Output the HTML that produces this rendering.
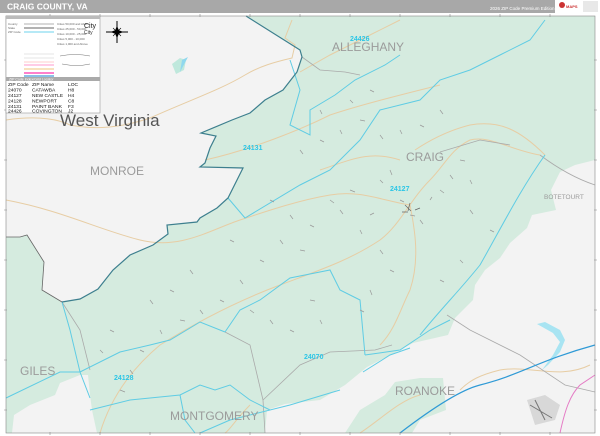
<!DOCTYPE html>
<html><head><meta charset="utf-8"><style>
html,body{margin:0;padding:0;background:#fff;width:600px;height:436px;overflow:hidden}
svg{display:block}
text{font-family:"Liberation Sans",sans-serif}
</style></head><body>
<svg width="600" height="436" viewBox="0 0 600 436" xmlns="http://www.w3.org/2000/svg">
<rect x="0" y="0" width="600" height="436" fill="#fff"/>
<rect x="0" y="0" width="600" height="13" fill="#a8a8a8"/>
<text x="7" y="9.5" font-size="8.5" font-weight="bold" fill="#fff">CRAIG COUNTY, VA</text>
<text x="490" y="10" font-size="4.5" fill="#fff">2026 ZIP Code Premium Edition</text>
<rect x="555" y="0" width="45" height="13" fill="#fff"/>
<circle cx="562" cy="5" r="3" fill="#c33"/>
<text x="566" y="8" font-size="4" fill="#c33" font-weight="bold">MAPS</text>
<rect x="583" y="1" width="15" height="11" fill="#e8e8e8"/>
<rect x="6" y="16" width="589" height="417" fill="#d5ebdf"/>
<path d="M6,16 L246,16 L300,50 L302,57 L297,72 L283,90 L265,100 L250,113 L232,120 L201,133 L216,136 L210,148 L205,163 L200,167 L243,168 L228,198 L217,208 L200,218 L197,222 L167,225 L168,234 L153,245 L130,255 L113,270 L98,289 L80,299 L62,302 L42,290 L44,262 L27,235 L20,237 L6,237 Z" fill="#f3f3f3"/>
<path d="M12,433 L14,415 L30,405 L55,395 L60,383 L80,375 L88,375 L90,395 L92,410 L97,433 Z" fill="#f3f3f3"/>
<path d="M595,160 L575,165 L560,172 L551,190 L556,210 L532,215 L527,228 L510,243 L500,258 L485,270 L475,285 L473,300 L455,318 L448,335 L413,343 L400,350 L367,367 L345,385 L320,400 L285,404 L267,410 L265,433 L595,433 Z" fill="#f3f3f3"/>
<path d="M345,433 L360,410 L385,395 L395,382 L420,378 L443,378 L446,410 L420,420 L412,433 Z" fill="#d5ebdf"/>
<path d="M537,324 L545,322 L560,330 L565,340 L560,352 L548,365 L542,370 L553,355 L560,342 L553,333 Z" fill="#a8e4f2"/>
<path d="M172,64 L180,58 L186,60 L184,70 L176,74 Z" fill="#bfe8dc"/>
<path d="M182,60 L188,57 L180,72 Z" fill="#8fd8ee"/>
<g fill="none" stroke="#e7cda4" stroke-width="1">
<path d="M6,120 C40,115 60,120 70,125 C95,130 120,128 150,118 C190,100 220,90 245,75 C260,66 275,62 292,58 L295,45 L285,38 L292,20"/>
<path d="M300,72 L330,55 L370,35 L400,20"/>
<path d="M205,160 C250,150 300,130 330,115 C360,105 400,95 440,85"/>
<path d="M100,433 C110,400 130,370 160,345 C200,320 240,300 280,285 C320,270 350,260 380,240 C400,225 410,200 430,180 C445,165 450,150 470,140 C490,135 510,150 540,155"/>
<path d="M6,200 C60,210 100,230 140,240 C180,250 210,230 240,220 C270,210 300,200 330,195 C360,190 380,200 410,205"/>
<path d="M410,205 C415,230 420,260 410,290 C400,310 395,330 380,345"/>
<path d="M415,150 C430,140 450,130 470,125 C500,120 520,130 545,155"/>
<path d="M400,160 C370,150 350,160 320,170"/>
<path d="M460,390 C470,380 480,375 500,370 C530,365 560,380 590,365"/>
<path d="M360,433 C380,420 400,400 420,395"/>
<path d="M250,405 C235,420 230,430 225,433"/>
</g>
<g fill="none" stroke="#aaa" stroke-width="0.8">
<path d="M302,57 L320,70 L345,72 L360,75"/>
<path d="M440,152 L480,140 L510,145"/>
<path d="M540,155 C560,170 580,180 595,185"/>
<path d="M265,433 L263,400 L300,365 L330,352 L375,350 L392,345"/>
<path d="M225,332 L250,345 L263,400"/>
<path d="M447,315 L470,330 L520,355 L565,385 L595,392"/>
<path d="M62,302 L80,330 L90,370"/>
</g>
<path d="M400,433 C430,410 460,390 480,385 C520,375 540,360 595,345" fill="none" stroke="#2f9ad6" stroke-width="1.2"/>
<path d="M560,433 C565,410 570,395 580,385 L595,375" fill="none" stroke="#e57bc5" stroke-width="1"/>
<path d="M527,400 L545,395 L560,405 L555,420 L535,425 Z" fill="#d8d8d8"/>
<path d="M530,405 L552,418 M535,400 L545,420" stroke="#777" stroke-width="1"/>
<g fill="none" stroke="#5fcce4" stroke-width="1">
<path d="M228,198 L245,218 L300,185 L330,170 L360,140 L380,110 L420,100 L440,80 L470,70 L500,55 L530,40 L545,20"/>
<path d="M290,60 L300,90 L290,125 L310,135 L310,110 L335,95 L355,80 L385,65 L400,55"/>
<path d="M545,155 C520,190 500,230 480,265 C460,290 440,310 420,335"/>
<path d="M62,302 L70,330 L80,372 L90,398"/>
<path d="M6,398 L60,372 L80,372 L120,352 L150,345 L170,340 L200,322 L225,332"/>
<path d="M225,332 L240,310 L260,300 L290,278 L330,270 L340,290 L360,300 L365,355"/>
<path d="M365,355 L400,350 L430,330 L450,320"/>
<path d="M90,410 L130,400 L180,395 L200,385 L215,390 L230,385 L250,400 L270,410"/>
<path d="M180,395 L185,420 L195,433"/>
<path d="M200,433 L230,420 L290,405 L340,390"/>
<path d="M363,372 L390,355 L410,348"/>
</g>
<path d="M246,16 L300,50 L302,57 L297,72 L283,90 L265,100 L250,113 L232,120 L201,133 L216,136 L210,148 L205,163 L200,167 L243,168 L228,198 L217,208 L200,218 L197,222 L167,225 L168,234 L153,245 L130,255 L113,270 L98,289 L80,299 L62,302" fill="none" stroke="#3d7f8e" stroke-width="1.2"/>
<path d="M62,302 L42,290 L44,262 L27,235 L20,237 L6,237" fill="none" stroke="#666" stroke-width="0.8"/>
<g stroke="#999" stroke-width="0.7">
<path d="M330,200 l4,3 M340,210 l3,4 M350,190 l5,2 M360,230 l2,4 M370,215 l4,-2 M380,180 l3,3 M390,170 l2,5 M400,200 l4,2 M410,215 l5,1 M420,220 l3,4 M430,200 l2,-3 M440,190 l4,3 M450,175 l3,4 M460,160 l5,1 M470,180 l2,4 M380,250 l3,4 M390,270 l4,2 M370,290 l2,5 M360,310 l4,2 M300,250 l5,1 M280,240 l3,4 M260,260 l4,2 M240,280 l3,4 M220,300 l4,2 M200,310 l3,4 M180,320 l5,1 M160,330 l2,4 M140,350 l4,2 M130,370 l3,4 M120,390 l5,2 M250,310 l4,3 M270,320 l3,4 M290,330 l4,2 M310,300 l5,1 M320,320 l2,4 M230,240 l4,2 M300,150 l3,4 M320,140 l4,2 M340,130 l2,4 M360,120 l5,1 M380,135 l3,4 M400,130 l2,4 M420,125 l4,2 M440,110 l3,4 M350,100 l3,3 M370,90 l4,2 M320,110 l2,4 M270,200 l4,2 M290,215 l3,4 M310,225 l4,2 M190,270 l3,4 M170,290 l4,2 M150,300 l3,4 M110,330 l4,2 M100,350 l3,3 M470,210 l3,4 M490,230 l4,2 M460,260 l3,3 M440,280 l4,2"/>
</g>
<g stroke="#666" stroke-width="0.7"><path d="M405,205 l6,6 M410,203 l-2,8 M415,210 l5,-2 M402,212 l6,0"/></g>
<g fill="#9b9b9b">
<text x="90" y="175" font-size="12">MONROE</text>
<text x="332" y="51" font-size="12">ALLEGHANY</text>
<text x="406" y="161" font-size="12">CRAIG</text>
<text x="544" y="199" font-size="6.5">BOTETOURT</text>
<text x="20" y="375" font-size="12">GILES</text>
<text x="170" y="420" font-size="12">MONTGOMERY</text>
<text x="395" y="395" font-size="12">ROANOKE</text>
</g>
<text x="60" y="126" font-size="17" fill="#555">West Virginia</text>
<g fill="#2cc6e6" font-size="7" font-weight="bold">
<text x="350" y="41">24426</text>
<text x="243" y="150">24131</text>
<text x="390" y="191">24127</text>
<text x="304" y="359">24070</text>
<text x="114" y="380">24128</text>
</g>
<g stroke="#000" stroke-width="1" fill="#000">
<path d="M117,21 L117,43 M106,32 L128,32" />
<path d="M117,27 L119,32 L117,37 L115,32 Z M112,32 L117,30 L122,32 L117,34 Z"/>
<path d="M113,28 L121,36 M121,28 L113,36" stroke-width="0.6"/>
</g>
<g stroke="#888" stroke-width="0.6">
<rect x="6" y="16" width="589" height="417" fill="none"/>
<path d="M50,14 v3 M100,14 v3 M150,14 v3 M200,14 v3 M250,14 v3 M300,14 v3 M350,14 v3 M400,14 v3 M450,14 v3 M500,14 v3 M550,14 v3 M50,432 v3 M100,432 v3 M150,432 v3 M200,432 v3 M250,432 v3 M300,432 v3 M350,432 v3 M400,432 v3 M450,432 v3 M500,432 v3 M550,432 v3 M4,60 h3 M4,110 h3 M4,160 h3 M4,210 h3 M4,260 h3 M4,310 h3 M4,360 h3 M4,410 h3 M594,60 h3 M594,110 h3 M594,160 h3 M594,210 h3 M594,260 h3 M594,310 h3 M594,360 h3 M594,410 h3"/>
</g>
<rect x="6" y="16" width="94" height="97" fill="#fff" stroke="#999" stroke-width="0.6"/>
<rect x="6" y="16" width="94" height="3" fill="#bbb"/>
<g stroke-width="1.5">
<path d="M24,24 h30" stroke="#ccc"/>
<path d="M24,28 h30" stroke="#999"/>
<path d="M24,32 h30" stroke="#9ee2f4"/>
<path d="M24,54 h30" stroke="#eee"/>
<path d="M24,58 h30" stroke="#eee"/>
<path d="M24,62 h30" stroke="#fdd"/>
<path d="M24,65 h30" stroke="#fbd"/>
<path d="M24,69 h30" stroke="#f6d7a8"/>
<path d="M24,73 h30" stroke="#f5b"/>
<path d="M24,76 h30" stroke="#6ad"/>
</g>
<g font-size="3" fill="#666"><text x="8" y="25">County</text><text x="8" y="29">State</text><text x="8" y="33">ZIP Code</text>
<text x="57" y="25">Cities 50,000 and Above</text><text x="57" y="30">Cities 25,000 - 50,000</text><text x="57" y="35">Cities 10,000 - 25,000</text><text x="57" y="40">Cities 5,000 - 10,000</text><text x="57" y="45">Cities 1,000 and Above</text></g>
<text x="84" y="28" font-size="7" fill="#222">City</text>
<text x="84" y="34" font-size="5" fill="#333">City</text>
<path d="M60,56 q15,-3 30,0 M62,64 q15,3 28,0" stroke="#777" stroke-width="0.6" fill="none"/>
<rect x="6" y="77" width="94" height="4" fill="#aaa"/>
<text x="9" y="80.5" font-size="3.5" fill="#fff">ZIP Code Index/Grid Locator</text>
<g font-size="4.9" fill="#111">
<text x="8" y="86">ZIP Code</text><text x="32" y="86">ZIP Name</text><text x="68" y="86">LOC</text>
<text x="8" y="91.5">24070</text><text x="32" y="91.5">CATAWBA</text><text x="68" y="91.5">H8</text>
<text x="8" y="97">24127</text><text x="32" y="97" textLength="31" lengthAdjust="spacingAndGlyphs">NEW CASTLE</text><text x="68" y="97">H4</text>
<text x="8" y="102.5">24128</text><text x="32" y="102.5">NEWPORT</text><text x="68" y="102.5">C8</text>
<text x="8" y="108">24131</text><text x="32" y="108" textLength="30" lengthAdjust="spacingAndGlyphs">PAINT BANK</text><text x="68" y="108">F3</text>
<text x="8" y="112.5">24426</text><text x="32" y="112.5" textLength="30" lengthAdjust="spacingAndGlyphs">COVINGTON</text><text x="68" y="112.5">J2</text>
</g>
</svg>
</body></html>
